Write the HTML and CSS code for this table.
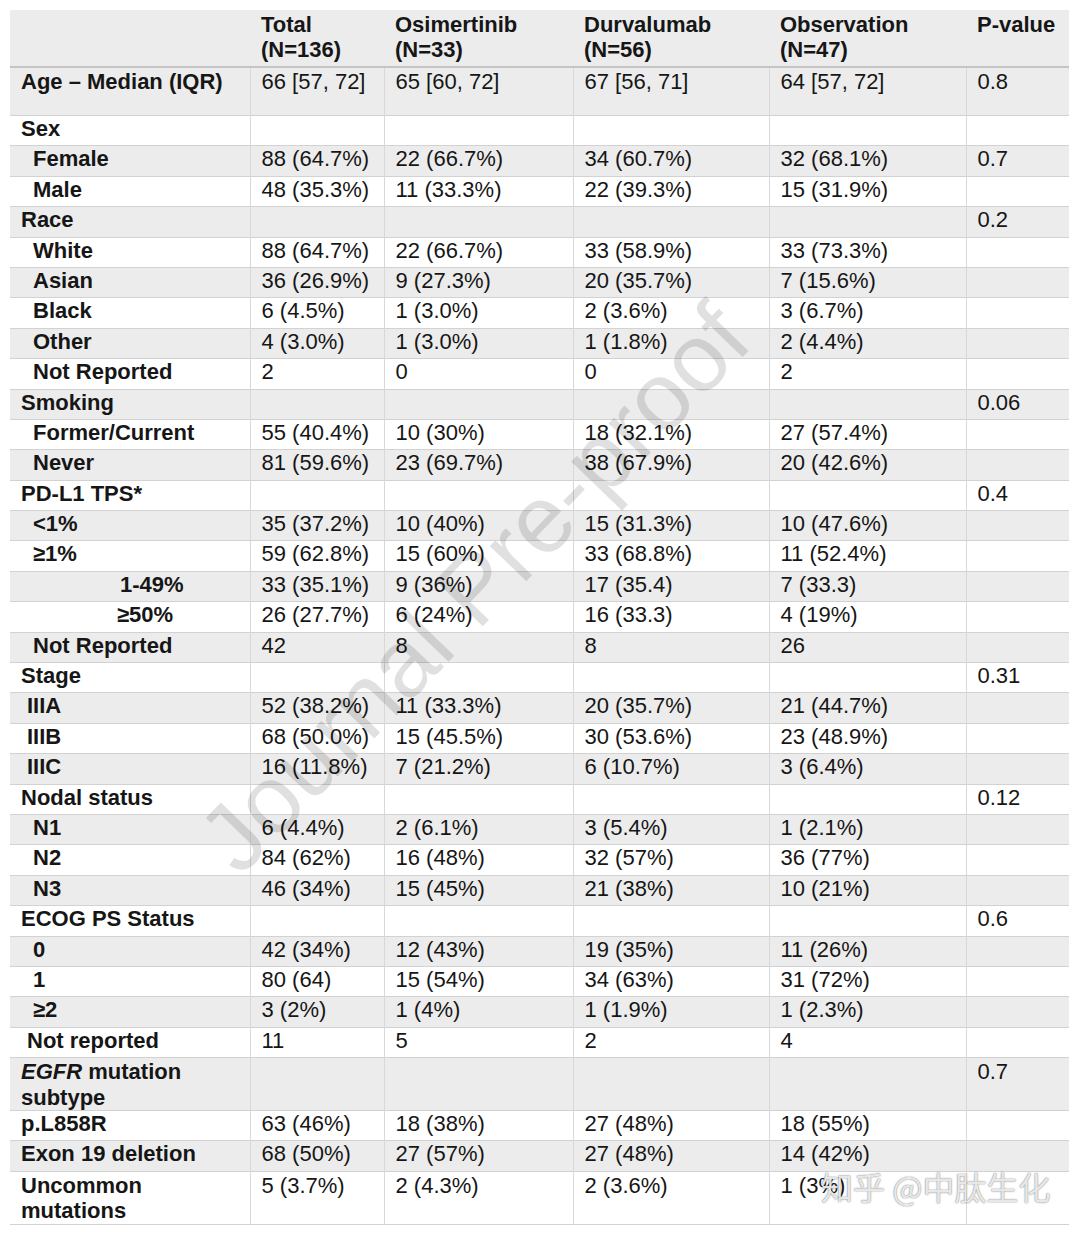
FILE: index.html
```html
<!DOCTYPE html>
<html lang="en">
<head>
<meta charset="utf-8">
<title>Table</title>
<link rel="stylesheet" href="styles.css">
</head>
<body>
<div class="page">
<table class="tbl">
<colgroup>
<col class="c1"><col class="c2"><col class="c3"><col class="c4"><col class="c5"><col class="c6">
</colgroup>
<thead>
<tr class="g head">
<th></th><th>Total<br>(N=136)</th><th>Osimertinib<br>(N=33)</th><th>Durvalumab<br>(N=56)</th><th>Observation<br>(N=47)</th><th>P-value</th>
</tr>
</thead>
<tbody>
<tr class="g age"><td class="lab">Age – Median (IQR)</td><td>66 [57, 72]</td><td>65 [60, 72]</td><td>67 [56, 71]</td><td>64 [57, 72]</td><td>0.8</td></tr>
<tr><td class="lab">Sex</td><td></td><td></td><td></td><td></td><td></td></tr>
<tr class="g"><td class="lab i1">Female</td><td>88 (64.7%)</td><td>22 (66.7%)</td><td>34 (60.7%)</td><td>32 (68.1%)</td><td>0.7</td></tr>
<tr><td class="lab i1">Male</td><td>48 (35.3%)</td><td>11 (33.3%)</td><td>22 (39.3%)</td><td>15 (31.9%)</td><td></td></tr>
<tr class="g"><td class="lab">Race</td><td></td><td></td><td></td><td></td><td>0.2</td></tr>
<tr><td class="lab i1">White</td><td>88 (64.7%)</td><td>22 (66.7%)</td><td>33 (58.9%)</td><td>33 (73.3%)</td><td></td></tr>
<tr class="g"><td class="lab i1">Asian</td><td>36 (26.9%)</td><td>9 (27.3%)</td><td>20 (35.7%)</td><td>7 (15.6%)</td><td></td></tr>
<tr><td class="lab i1">Black</td><td>6 (4.5%)</td><td>1 (3.0%)</td><td>2 (3.6%)</td><td>3 (6.7%)</td><td></td></tr>
<tr class="g"><td class="lab i1">Other</td><td>4 (3.0%)</td><td>1 (3.0%)</td><td>1 (1.8%)</td><td>2 (4.4%)</td><td></td></tr>
<tr><td class="lab i1">Not Reported</td><td>2</td><td>0</td><td>0</td><td>2</td><td></td></tr>
<tr class="g"><td class="lab">Smoking</td><td></td><td></td><td></td><td></td><td>0.06</td></tr>
<tr><td class="lab i1">Former/Current</td><td>55 (40.4%)</td><td>10 (30%)</td><td>18 (32.1%)</td><td>27 (57.4%)</td><td></td></tr>
<tr class="g"><td class="lab i1">Never</td><td>81 (59.6%)</td><td>23 (69.7%)</td><td>38 (67.9%)</td><td>20 (42.6%)</td><td></td></tr>
<tr><td class="lab">PD-L1 TPS*</td><td></td><td></td><td></td><td></td><td>0.4</td></tr>
<tr class="g"><td class="lab i1">&lt;1%</td><td>35 (37.2%)</td><td>10 (40%)</td><td>15 (31.3%)</td><td>10 (47.6%)</td><td></td></tr>
<tr><td class="lab i1">≥1%</td><td>59 (62.8%)</td><td>15 (60%)</td><td>33 (68.8%)</td><td>11 (52.4%)</td><td></td></tr>
<tr class="g"><td class="lab i3">1-49%</td><td>33 (35.1%)</td><td>9 (36%)</td><td>17 (35.4)</td><td>7 (33.3)</td><td></td></tr>
<tr><td class="lab i4">≥50%</td><td>26 (27.7%)</td><td>6 (24%)</td><td>16 (33.3)</td><td>4 (19%)</td><td></td></tr>
<tr class="g"><td class="lab i1">Not Reported</td><td>42</td><td>8</td><td>8</td><td>26</td><td></td></tr>
<tr><td class="lab">Stage</td><td></td><td></td><td></td><td></td><td>0.31</td></tr>
<tr class="g"><td class="lab i2">IIIA</td><td>52 (38.2%)</td><td>11 (33.3%)</td><td>20 (35.7%)</td><td>21 (44.7%)</td><td></td></tr>
<tr><td class="lab i2">IIIB</td><td>68 (50.0%)</td><td>15 (45.5%)</td><td>30 (53.6%)</td><td>23 (48.9%)</td><td></td></tr>
<tr class="g"><td class="lab i2">IIIC</td><td>16 (11.8%)</td><td>7 (21.2%)</td><td>6 (10.7%)</td><td>3 (6.4%)</td><td></td></tr>
<tr><td class="lab">Nodal status</td><td></td><td></td><td></td><td></td><td>0.12</td></tr>
<tr class="g"><td class="lab i1">N1</td><td>6 (4.4%)</td><td>2 (6.1%)</td><td>3 (5.4%)</td><td>1 (2.1%)</td><td></td></tr>
<tr><td class="lab i1">N2</td><td>84 (62%)</td><td>16 (48%)</td><td>32 (57%)</td><td>36 (77%)</td><td></td></tr>
<tr class="g"><td class="lab i1">N3</td><td>46 (34%)</td><td>15 (45%)</td><td>21 (38%)</td><td>10 (21%)</td><td></td></tr>
<tr><td class="lab">ECOG PS Status</td><td></td><td></td><td></td><td></td><td>0.6</td></tr>
<tr class="g"><td class="lab i1">0</td><td>42 (34%)</td><td>12 (43%)</td><td>19 (35%)</td><td>11 (26%)</td><td></td></tr>
<tr><td class="lab i1">1</td><td>80 (64)</td><td>15 (54%)</td><td>34 (63%)</td><td>31 (72%)</td><td></td></tr>
<tr class="g"><td class="lab i1">≥2</td><td>3 (2%)</td><td>1 (4%)</td><td>1 (1.9%)</td><td>1 (2.3%)</td><td></td></tr>
<tr><td class="lab i2">Not reported</td><td>11</td><td>5</td><td>2</td><td>4</td><td></td></tr>
<tr class="g dbl"><td class="lab"><em>EGFR</em> mutation subtype</td><td></td><td></td><td></td><td></td><td>0.7</td></tr>
<tr><td class="lab">p.L858R</td><td>63 (46%)</td><td>18 (38%)</td><td>27 (48%)</td><td>18 (55%)</td><td></td></tr>
<tr class="g"><td class="lab">Exon 19 deletion</td><td>68 (50%)</td><td>27 (57%)</td><td>27 (48%)</td><td>14 (42%)</td><td></td></tr>
<tr class="dbl last"><td class="lab">Uncommon mutations</td><td>5 (3.7%)</td><td>2 (4.3%)</td><td>2 (3.6%)</td><td>1 (3%)</td><td></td></tr>
</tbody>
</table>
<div class="wm">Journal Pre-proof</div>
<div class="zh">知乎 @中肽生化</div>
</div>
</body>
</html>
```

FILE: styles.css
```css
html, body {
  margin: 0;
  padding: 0;
  background: #ffffff;
}

.page {
  position: relative;
  width: 1080px;
  height: 1233px;
  padding: 10px 0 0 10px;
  box-sizing: border-box;
  overflow: hidden;
  font-family: "Liberation Sans", Arial, sans-serif;
  color: #161616;
}

.tbl {
  border-collapse: collapse;
  table-layout: fixed;
  width: 1059px;
  font-size: 22px;
  line-height: 25px;
}

.c1 { width: 240px; }
.c2 { width: 134px; }
.c3 { width: 189px; }
.c4 { width: 196px; }
.c5 { width: 197px; }
.c6 { width: 103px; }

.tbl tr {
  height: 30.4px;
}

.tbl td,
.tbl th {
  padding: 0 4px 0 11px;
  vertical-align: top;
  text-align: left;
  border-top: 1px solid #d2d2d2;
  border-left: 1px solid #d8d8d8;
}

.tbl td:first-child {
  border-left: none;
}

.tbl th {
  font-weight: bold;
  border-top: none;
  border-left: none;
  border-bottom: 2px solid #c4c4c4;
  padding-top: 2px;
}

.tbl .head {
  height: 57px;
}

.tbl .age {
  height: 48.5px;
}

.tbl .age td {
  padding-top: 1px;
}

.tbl .dbl td {
  padding-top: 1px;
  line-height: 25.4px;
}

.tbl .last td {
  border-bottom: 1px solid #d2d2d2;
}

.g {
  background: #ececec;
}

.lab {
  font-weight: bold;
}

.lab em {
  font-style: italic;
}

.lab.i1 { padding-left: 23px; }
.lab.i2 { padding-left: 17px; }
.lab.i3 { padding-left: 110px; }
.lab.i4 { padding-left: 107px; }

.wm {
  position: absolute;
  left: 474px;
  top: 588px;
  transform: translate(-50%, -50%) rotate(-46deg);
  font-family: "Liberation Sans", Arial, sans-serif;
  font-size: 96px;
  line-height: 1;
  white-space: nowrap;
  color: rgba(0, 0, 0, 0.12);
  pointer-events: none;
}

.zh {
  position: absolute;
  left: 821px;
  top: 1167px;
  font-family: "Noto Sans CJK SC", sans-serif;
  font-size: 32px;
  line-height: 1.2;
  white-space: nowrap;
  color: rgba(255, 255, 255, 0.85);
  text-shadow: 0 0 1px rgba(0, 0, 0, 0.5), 0 0 2px rgba(0, 0, 0, 0.25);
  pointer-events: none;
}
```
